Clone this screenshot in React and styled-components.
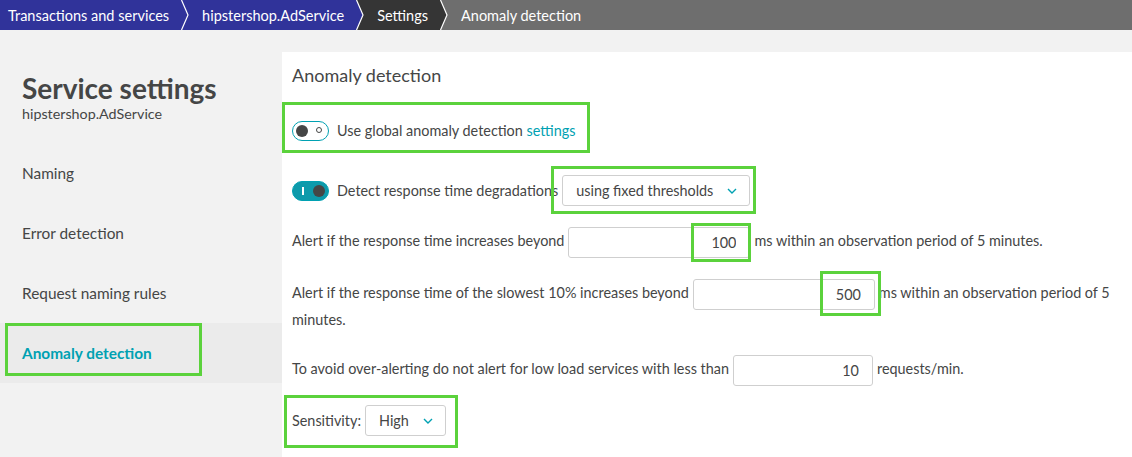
import React from "react";
import styled, { createGlobalStyle } from "styled-components";

const GlobalStyle = createGlobalStyle`
    body {
        margin: 0;
        background: #f2f2f2;
        font-family: Lato, "Noto Sans", sans-serif;
        color: #454646;
    }
`

const TEAL = "#00a1b2";
const GREEN = "#5bd23c";

const crumbs = [
    { label: "Transactions and services", bg: "#30339a" },
    { label: "hipstershop.AdService", bg: "#30339a" },
    { label: "Settings", bg: "#353535" },
    { label: "Anomaly detection", bg: "#6e6e6e" },
];

const navItems = ["Naming", "Error detection", "Request naming rules", "Anomaly detection"];

const Separator = ({ from, to }) => (
    <SepSvg width="9" height="30" viewBox="0 0 9 30">
        <rect width="9" height="30" fill={to} />
        <polygon points="0,0 1.5,0 8,15 1.5,30 0,30" fill={from} />
        <polyline points="1.5,0 8,15 1.5,30" fill="none" stroke="#fff" strokeWidth="1.2" />
    </SepSvg>
)

const Chevron = () => (
    <svg width="10" height="6" viewBox="0 0 10 6">
        <polyline points="1,1 5,5 9,1" fill="none" stroke={TEAL} strokeWidth="1.4" />
    </svg>
)

const App = () => {
    return (
        <>
            <GlobalStyle />
            <Breadcrumb>
                {crumbs.map((c, i) => (
                    <React.Fragment key={c.label}>
                        <Crumb $bg={c.bg} $first={i === 0}>{c.label}</Crumb>
                        {crumbs[i + 1] && <Separator from={c.bg} to={crumbs[i + 1].bg} />}
                    </React.Fragment>
                ))}
            </Breadcrumb>
            <Layout>
                <Sidebar>
                    <SideTitle>Service settings</SideTitle>
                    <SideSub>hipstershop.AdService</SideSub>
                    <Nav>
                        {navItems.map((item, i) => (
                            <NavItem key={item} $active={i === navItems.length - 1}>
                                {item}
                                {i === navItems.length - 1 && <Mark $l={5} $t={0} $w={197} $h={53} />}
                            </NavItem>
                        ))}
                    </Nav>
                </Sidebar>
                <Panel>
                    <PanelTitle>Anomaly detection</PanelTitle>
                    <ToggleRow $first>
                        <Toggle />
                        <Label>Use global anomaly detection <Link>settings</Link></Label>
                        <Mark $l={-10} $t={-13} $w={308} $h={51} />
                    </ToggleRow>
                    <ToggleRow>
                        <Toggle $on />
                        <Label>Detect response time degradations</Label>
                        <Select $w={188}>
                            using fixed thresholds <Chevron />
                            <Mark $l={-12} $t={-10} $w={205} $h={48} />
                        </Select>
                    </ToggleRow>
                    <Para>
                        Alert if the response time increases beyond
                        <InputWrap>
                            <Input $w={182} value="100" readOnly />
                            <Mark $l={123} $t={-4} $w={60} $h={39} />
                        </InputWrap>
                        ms within an observation period of 5 minutes.
                    </Para>
                    <Para>
                        Alert if the response time of the slowest 10% increases beyond
                        <InputWrap>
                            <Input $w={182} value="500" readOnly />
                            <Mark $l={127} $t={-8} $w={61} $h={45} />
                        </InputWrap>
                        ms within an observation period of 5 minutes.
                    </Para>
                    <Para $gap={25}>
                        To avoid over-alerting do not alert for low load services with less than
                        <InputWrap>
                            <Input $w={140} value="10" readOnly />
                        </InputWrap>
                        requests/min.
                    </Para>
                    <SensitivityRow>
                        <Label>Sensitivity:</Label>
                        <Select $w={81}>
                            High <Chevron />
                        </Select>
                        <Mark $l={-8} $t={-10} $w={174} $h={53} />
                    </SensitivityRow>
                </Panel>
            </Layout>
        </>
    )
}

const Breadcrumb = styled.nav`
    display: flex;
    height: 30px;
    background: #6e6e6e;
`
const Crumb = styled.div`
    display: flex;
    align-items: center;
    height: 30px;
    padding: 0 11px 0 ${p => p.$first ? "8px" : "13px"};
    background: ${p => p.$bg};
    color: #fff;
    font-size: 14.5px;
    white-space: nowrap;
`
const SepSvg = styled.svg`
    display: block;
    flex: none;
`
const Layout = styled.div`
    display: flex;
    min-height: calc(100vh - 30px);
`
const Sidebar = styled.aside`
    width: 282px;
    flex: none;
    padding-top: 42px;
`
const SideTitle = styled.h1`
    margin: 0;
    padding-left: 22px;
    font-size: 28px;
    line-height: 32px;
    font-weight: 700;
    color: #454646;
`
const SideSub = styled.div`
    padding-left: 22px;
    font-size: 14.3px;
    line-height: 20px;
`
const Nav = styled.ul`
    list-style: none;
    margin: 19px 0 0;
    padding: 0;
`
const NavItem = styled.li`
    position: relative;
    display: flex;
    align-items: center;
    height: 60px;
    padding-left: 22px;
    font-size: 15.4px;
    background: ${p => p.$active ? "#ebebeb" : "transparent"};
    color: ${p => p.$active ? TEAL : "#454646"};
    font-weight: ${p => p.$active ? 700 : 400};
`
const Mark = styled.span`
    position: absolute;
    left: ${p => p.$l}px;
    top: ${p => p.$t}px;
    width: ${p => p.$w}px;
    height: ${p => p.$h}px;
    box-sizing: border-box;
    border: 3px solid ${GREEN};
    pointer-events: none;
`
const Panel = styled.main`
    flex: 1;
    margin-top: 22px;
    background: #fff;
    padding: 11px 10px 0;
    font-size: 14.4px;
`
const PanelTitle = styled.h2`
    margin: 0;
    font-size: 18px;
    line-height: 24px;
    font-weight: 400;
`
const ToggleRow = styled.div`
    position: relative;
    display: flex;
    align-items: center;
    height: 31px;
    margin-top: ${p => p.$first ? "28px" : "29px"};
`
const Toggle = styled.span`
    position: relative;
    display: inline-block;
    flex: none;
    width: 37px;
    height: 20px;
    box-sizing: border-box;
    border-radius: 10px;
    border: 1.5px solid ${TEAL};
    background: ${p => p.$on ? "#0e9aab" : "#fff"};
    &::before {
        content: "";
        position: absolute;
        top: 50%;
        margin-top: -6px;
        width: 12px;
        height: 12px;
        border-radius: 50%;
        background: #454646;
        ${p => p.$on ? "right: 3px;" : "left: 3px;"}
    }
    &::after {
        content: "";
        position: absolute;
        top: 50%;
        ${p => p.$on
            ? "left: 9px; width: 1.5px; height: 8px; margin-top: -4px; background: #fff;"
            : "right: 6px; width: 4px; height: 4px; margin-top: -3.5px; border: 1.5px solid #454646; border-radius: 50%;"}
    }
`
const Label = styled.span`
    margin-left: 8px;
    line-height: 20px;
    white-space: nowrap;
`
const Link = styled.span`
    color: ${TEAL};
`
const Select = styled.div`
    position: relative;
    display: flex;
    align-items: center;
    justify-content: space-between;
    width: ${p => p.$w}px;
    height: 31px;
    box-sizing: border-box;
    margin-left: 4px;
    padding: 0 12px 0 13px;
    border: 1px solid #cfcfcf;
    border-radius: 3px;
    background: #fff;
`
const Para = styled.div`
    margin-top: ${p => p.$gap || 21}px;
    line-height: 20px;
`
const InputWrap = styled.span`
    position: relative;
    display: inline-block;
    vertical-align: middle;
    margin: 0 4px;
`
const Input = styled.input`
    display: block;
    width: ${p => p.$w}px;
    height: 31px;
    box-sizing: border-box;
    padding: 0 13px 0 8px;
    border: 1px solid #cfcfcf;
    border-radius: 3px;
    text-align: right;
    font: inherit;
    color: #454646;
    outline: none;
`
const SensitivityRow = styled.div`
    position: relative;
    display: inline-flex;
    align-items: center;
    margin-top: 19px;
    ${Label} {
        margin-left: 0;
    }
`

export default App;
